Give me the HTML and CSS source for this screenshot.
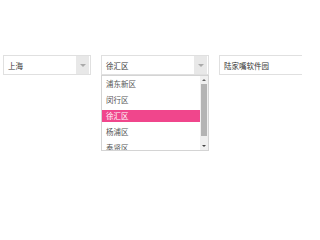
FILE: index.html
```html
<!DOCTYPE html>
<html lang="zh">
<head>
<meta charset="utf-8">
<link rel="stylesheet" href="styles.css">
</head>
<body>
<div class="row">
  <div class="select w1">
    <span class="val">上海</span>
    <span class="arrow"><i class="tri"></i></span>
  </div>
  <div class="select w2">
    <span class="val">徐汇区</span>
    <span class="arrow"><i class="tri"></i></span>
    <div class="list">
      <div class="items">
        <div class="item">浦东新区</div>
        <div class="item">闵行区</div>
        <div class="item active">徐汇区</div>
        <div class="item">杨浦区</div>
        <div class="item">奉贤区</div>
      </div>
      <div class="sbar">
        <div class="sbtn"><i class="up"></i></div>
        <div class="track"><div class="thumb"></div></div>
        <div class="sbtn"><i class="down"></i></div>
      </div>
    </div>
  </div>
  <div class="input">陆家嘴软件园</div>
</div>
</body>
</html>
```
FILE: styles.css
```css
html, body {
  margin: 0;
  padding: 0;
  background: #fff;
  overflow: hidden;
}
body {
  width: 302px;
  height: 200px;
  font-family: "Noto Sans CJK SC", "Noto Sans", sans-serif;
  font-size: 7.5px;
  color: #333;
}
.row {
  display: flex;
  gap: 10px;
  padding: 55px 0 0 3px;
}
.select {
  position: relative;
  box-sizing: border-box;
  height: 20px;
  border: 1px solid #e0e0e0;
  display: flex;
  align-items: center;
  justify-content: space-between;
  flex: none;
}
.w1 { width: 88px; }
.w2 { width: 108px; }
.val {
  padding-left: 4px;
}
.arrow {
  align-self: stretch;
  width: 13px;
  margin-right: 1px;
  background: #e8e8e8;
  display: flex;
  align-items: center;
  justify-content: center;
}
.tri {
  width: 0;
  height: 0;
  border-left: 3px solid transparent;
  border-right: 3px solid transparent;
  border-top: 3px solid #aaa;
}
.input {
  box-sizing: border-box;
  flex: none;
  width: 100px;
  height: 20px;
  border: 1px solid #e0e0e0;
  padding-left: 4px;
  display: flex;
  align-items: center;
}
.list {
  position: absolute;
  left: -1px;
  top: 19px;
  width: 108px;
  height: 76px;
  box-sizing: border-box;
  border: 1px solid #d4d4d4;
  background: #fff;
  display: flex;
  overflow: hidden;
}
.items {
  flex: 1;
  padding-top: 2px;
  display: flex;
  flex-direction: column;
  gap: 4px;
}
.item {
  height: 12px;
  line-height: 12px;
  padding-left: 4px;
  flex: none;
  color: #555;
}
.item.active {
  background: #f0468c;
  color: #fff;
}
.sbar {
  width: 8px;
  flex: none;
  display: flex;
  flex-direction: column;
  background: #f0f0f0;
}
.sbtn {
  height: 8px;
  flex: none;
  display: flex;
  align-items: center;
  justify-content: center;
}
.track {
  flex: 1;
  padding: 0 1px;
}
.thumb {
  height: 52px;
  background: #b4b4b4;
}
.up {
  width: 0; height: 0;
  border-left: 2px solid transparent;
  border-right: 2px solid transparent;
  border-bottom: 2px solid #666;
}
.down {
  width: 0; height: 0;
  border-left: 2px solid transparent;
  border-right: 2px solid transparent;
  border-top: 2px solid #444;
}
```
